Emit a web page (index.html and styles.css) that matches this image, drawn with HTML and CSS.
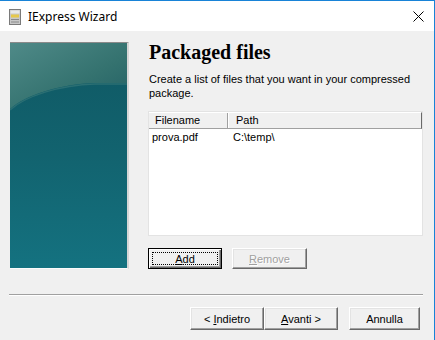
FILE: index.html
```html
<!DOCTYPE html>
<html>
<head>
<meta charset="utf-8">
<link rel="stylesheet" href="styles.css">
</head>
<body>
<div class="window">
  <div class="titlebar">
    <svg class="app-icon" width="12" height="16" viewBox="0 0 12 16">
      <rect x="0.5" y="0.5" width="11" height="15" fill="#c8c8c8" stroke="#7a7a7a"/>
      <rect x="1.5" y="1.5" width="9" height="3" fill="#e8e8e8"/>
      <rect x="2" y="5.5" width="8" height="3" fill="#e6c84a"/>
      <rect x="2" y="10" width="8" height="1" fill="#8a8a8a"/>
      <rect x="2" y="12.5" width="8" height="1" fill="#8a8a8a"/>
    </svg>
    <span class="title">IExpress Wizard</span>
    <svg class="close" width="11" height="11" viewBox="0 0 11 11">
      <path d="M0.5 0.5 L10.5 10.5 M10.5 0.5 L0.5 10.5" stroke="#000" stroke-width="1"/>
    </svg>
  </div>
  <div class="client">
    <div class="main">
      <div class="side">
        <svg width="117" height="225" viewBox="0 0 117 225">
          <defs>
            <linearGradient id="lower" x1="0" y1="0" x2="0" y2="1">
              <stop offset="0" stop-color="#0f5863"/>
              <stop offset="0.5" stop-color="#12636f"/>
              <stop offset="1" stop-color="#147280"/>
            </linearGradient>
            <linearGradient id="upper" x1="0" y1="0" x2="1" y2="1">
              <stop offset="0" stop-color="#4f8a88"/>
              <stop offset="0.6" stop-color="#34726f"/>
              <stop offset="1" stop-color="#225f64"/>
            </linearGradient>
          </defs>
          <rect width="117" height="225" fill="url(#lower)"/>
          <path d="M0 0 H117 V40 H85 C50 41 15 52 0 66 Z" fill="url(#upper)"/>
          <path d="M0 67 C15 53 50 42 85 41 H117" fill="none" stroke="#2b6f73" stroke-width="1.5"/>
        </svg>
      </div>
      <div class="content">
        <h1 class="heading">Packaged files</h1>
        <p class="desc">Create a list of files that you want in your compressed package.</p>
        <div class="listview">
          <div class="lv-header">
            <div class="col col-name">Filename</div>
            <div class="col col-path">Path</div>
            <div class="col col-rest"></div>
          </div>
          <div class="lv-row">
            <span class="cell-name">prova.pdf</span>
            <span class="cell-path">C:\temp\</span>
          </div>
        </div>
        <div class="list-buttons">
          <button class="btn btn-default btn-add"><span class="focus"><u>A</u>dd</span></button>
          <button class="btn btn-disabled btn-remove"><u>R</u>emove</button>
        </div>
      </div>
    </div>
    <div class="separator"></div>
    <div class="footer">
      <button class="btn btn-nav"><span>&lt; <u>I</u>ndietro</span></button>
      <button class="btn btn-nav"><span><u>A</u>vanti &gt;</span></button>
      <button class="btn btn-nav btn-cancel">Annulla</button>
    </div>
  </div>
</div>
</body>
</html>
```

FILE: styles.css
```css
* { box-sizing: border-box; }
html, body { margin: 0; padding: 0; background: #f0f0f0; }
body { font-family: "Liberation Sans", Arial, sans-serif; font-size: 11px; color: #000; }

.window {
  width: 435px;
  height: 340px;
  border-top: 1px solid #1883d7;
  border-right: 1px solid #1883d7;
  background: #f0f0f0;
  display: flex;
  flex-direction: column;
}

.titlebar {
  height: 30px;
  background: #fff;
  display: flex;
  align-items: center;
  padding-left: 9px;
  flex: none;
}
.app-icon { flex: none; margin-top: 1px; }
.title {
  font-family: "Noto Sans", "Open Sans", sans-serif;
  font-size: 12px;
  margin-left: 7px;
  color: #000;
}
.close { margin-left: auto; margin-right: 10px; }

.client {
  flex: 1;
  display: flex;
  flex-direction: column;
}

.main {
  display: flex;
  padding-top: 11px;
  padding-left: 10px;
  height: 253px;
}

.side {
  width: 119px;
  height: 227px;
  flex: none;
  border-top: 1px solid #8a8a8a;
  border-right: 2px solid #d6d6d6;
  border-bottom: 1px solid #fbfbfb;
  display: flex;
}
.side svg { display: block; }

.content {
  margin-left: 19px;
  width: 275px;
  display: flex;
  flex-direction: column;
}

.heading {
  font-family: "Liberation Serif", "Times New Roman", serif;
  font-weight: bold;
  font-size: 20px;
  margin: 0;
  padding-left: 1px;
  line-height: 20px;
  margin-top: 0px;
}

.desc {
  margin: 10px 0 0 1px;
  line-height: 14px;
  width: 270px;
}

.listview {
  margin-top: 11px;
  width: 275px;
  height: 125px;
  background: #fff;
  border: 1px solid #e3e3e3;
}
.lv-header {
  display: flex;
  height: 17px;
  background: #f0f0f0;
  border-top: 1px solid #fff;
  border-bottom: 1px solid #a0a0a0;
  border-right: 1px solid #696969;
}
.col {
  height: 100%;
  line-height: 14px;
  padding-left: 6px;
}
.col-name {
  width: 79px;
  border-right: 1px solid #a0a0a0;
  box-shadow: 1px 0 0 #fff;
}
.col-path { width: 100px; padding-left: 8px; }
.col-rest { flex: 1; }

.lv-row {
  display: flex;
  height: 14px;
  line-height: 14px;
  margin-top: 1px;
}
.cell-name { width: 80px; padding-left: 3px; }
.cell-path { padding-left: 4px; }

.list-buttons {
  display: flex;
  gap: 10px;
  margin-top: 12px;
}

.btn {
  font-family: "Liberation Sans", Arial, sans-serif;
  font-size: 11px;
  height: 21px;
  padding: 0;
  background: #f0f0f0;
  color: #000;
  border: 1px solid;
  border-color: #fff #696969 #696969 #fff;
  box-shadow: inset -1px -1px 0 #a0a0a0, inset 1px 1px 0 #e3e3e3;
  display: flex;
  align-items: center;
  justify-content: center;
}
.btn u { text-decoration: underline; text-underline-offset: 1px; }

.btn-add { width: 74px; }
.btn-default {
  border: 1px solid #000;
  box-shadow: inset 1px 1px 0 #fff, inset -1px -1px 0 #696969, inset -2px -2px 0 #a0a0a0;
  padding: 3px;
}
.btn-default .focus {
  width: 100%;
  height: 100%;
  border: 1px dotted #000;
  display: flex;
  align-items: center;
  justify-content: center;
}
.btn-remove { width: 75px; }
.btn-disabled {
  color: #a0a0a0;
  text-shadow: 1px 1px 0 #fff;
}

.separator {
  margin: 10px 11px 0 9px;
  height: 2px;
  border-top: 1px solid #a0a0a0;
  border-bottom: 1px solid #fff;
}

.footer {
  display: flex;
  justify-content: flex-end;
  padding-right: 14px;
  margin-top: 11px;
}
.btn-nav { width: 74px; height: 23px; }
.btn-cancel { width: 71px; margin-left: 11px; }
```
